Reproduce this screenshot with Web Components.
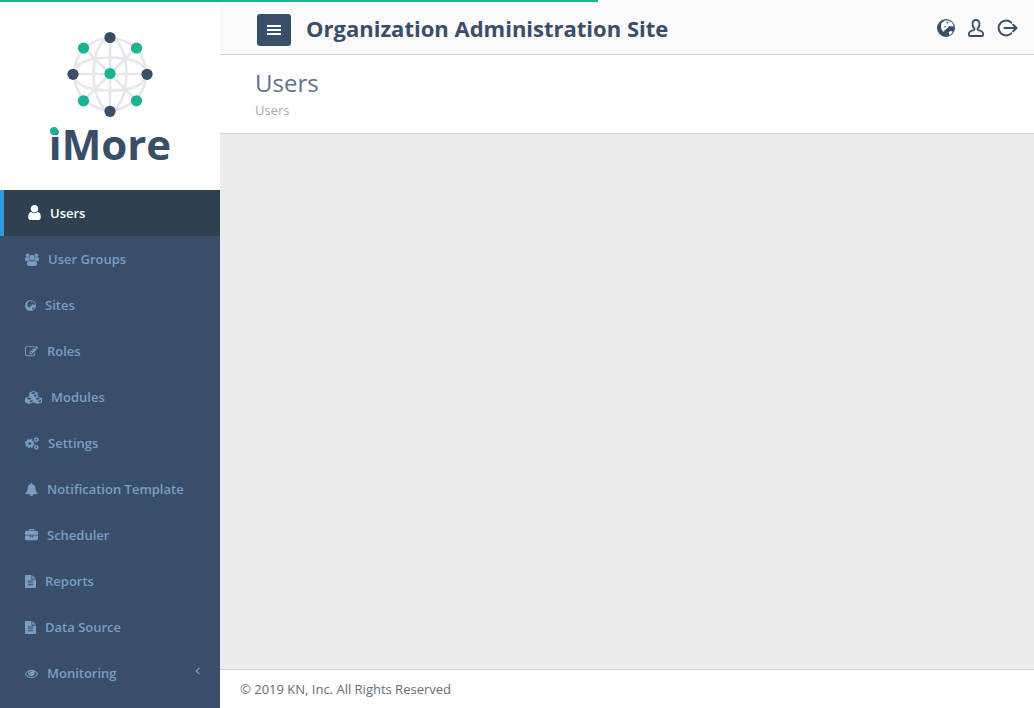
<!DOCTYPE html>
<html lang="en">
<head>
<meta charset="utf-8">
<meta name="viewport" content="width=device-width, initial-scale=1">
<title>Organization Administration Site</title>
<style>
html { --navy: #394e69; --green: #1ab394; --line: #d2d2d2; --muted: #779fc4; }
body { margin: 0; font: 13px/20px "Open Sans", sans-serif; color: #666c7a; }
</style>
</head>
<body>
<admin-app></admin-app>
<script>
const ICONS = {
  user: ['256 128 1280 1536', '<path d="M1536 1399q0 109-62.5 187t-150.5 78h-854q-88 0-150.5-78t-62.5-187q0-85 8.5-160.5t31.5-152 58.5-131 94-89 134.5-34.5q131 128 313 128t313-128q76 0 134.5 34.5t94 89 58.5 131 31.5 152 8.5 160.5zm-256-887q0 159-112.5 271.5t-271.5 112.5-271.5-112.5-112.5-271.5 112.5-271.5 271.5-112.5 271.5 112.5 112.5 271.5z"/>'],
  users: ['0 0 14 13', '<circle cx="2.7" cy="2.2" r="1.8"/><circle cx="11.3" cy="2.2" r="1.8"/><path d="M0 6.6C0 5 .4 4 1.2 4c.8.6 2 .8 3 .4-.2 1 0 1.8.5 2.6-1 0-1.6.4-2.1 1H1.5C.6 8 0 7.5 0 6.6zM14 6.6C14 5 13.6 4 12.8 4c-.8.6-2 .8-3 .4.2 1 0 1.8-.5 2.6 1 0 1.6.4 2.1 1h1.1C13.4 8 14 7.5 14 6.6z"/><circle cx="7" cy="4.7" r="2.7"/><path d="M4.3 7.4c1.6 1.4 3.8 1.4 5.4 0 1.6 0 2.3 1.6 2.3 3.7 0 1.2-.8 1.9-1.9 1.9H3.9C2.8 13 2 12.3 2 11.1 2 9 2.7 7.4 4.3 7.4z"/>'],
  globe: ['0 0 18 18', '<path fill-rule="evenodd" d="M9 0a9 9 0 1 0 0 18A9 9 0 0 0 9 0zM6.800 2.300L8.600 1.300 12 1.700l1.300 1.100 1.200.3 1.700 2.700.2 1.800-1.500-.3-1.500.3-.8-.8-1.300.9-.4 1.300-1.700.8-.9 1.500-1.500.2.6 1.200-1.400-.3-1.600-2.200L4 7l.4-2.700zM11.700 13.300l1.600-1.200 1.900.2.500.8-1.400 1.900-2 1.200z"/><path d="M9.600 2.600l1.900.6-.6 1.300-1.500-.5zM7.200 7.600l1.600-.5.3.8-1.300.5z"/>'],
  edit: ['0 0 1792 1792', '<path d="M888 1184l116-116-152-152-116 116v56h96v96h56zm440-720q-16-16-33 1l-350 350q-17 17-1 33t33-1l350-350q17-17 1-33zm80 594v190q0 119-84.5 203.5t-203.5 84.5h-832q-119 0-203.5-84.5t-84.5-203.5v-832q0-119 84.5-203.5t203.5-84.5h832q63 0 117 25 15 7 18 23 3 17-9 29l-49 49q-14 14-32 8-23-6-45-6h-832q-66 0-113 47t-47 113v832q0 66 47 113t113 47h832q66 0 113-47t47-113v-126q0-13 9-22l64-64q15-15 35-7t20 29zm-96-738l288 288-672 672h-288v-288zm444 132l-92 92-288-288 92-92q28-28 68-28t68 28l152 152q28 28 28 68t-28 68z"/>'],
  cubes: ['0 0 17 13', '<path fill-rule="evenodd" d="M8.500 0L12.700 1.400V5.500L17 7.100V11.200L12.800 13 8.500 11.200 4.200 13 0 11.200V7.100L4.300 5.500V1.400zM8.500 1L5.800 2.100 8.500 3.200 11.200 2.100zM9.200 4.300V6L11.600 5V3.400zM4.200 6.500L1.500 7.600 4.200 8.700 6.900 7.600zM4.900 9.800V11.500L7.500 10.400V8.700zM12.800 6.500L10.100 7.600 12.800 8.700 15.500 7.600zM13.500 9.800V11.500L16 10.400V8.700z"/>'],
  cogs: ['0 0 14 13', '<g fill="none" stroke="currentColor"><circle cx="4.7" cy="6.5" r="2.7" stroke-width="2.2"/><circle cx="4.7" cy="6.5" r="4.1" stroke-width="1.3" stroke-dasharray="1.7 1.52"/><circle cx="11.3" cy="2.7" r="1.5" stroke-width="1.3"/><circle cx="11.3" cy="2.7" r="2.3" stroke-width=".8" stroke-dasharray="1 .8"/><circle cx="11.3" cy="10.3" r="1.5" stroke-width="1.3"/><circle cx="11.3" cy="10.3" r="2.3" stroke-width=".8" stroke-dasharray="1 .8"/></g>'],
  bell: ['0 0 1792 1792', '<path d="M912 1696q0-16-16-16-59 0-101.5-42.5t-42.5-101.5q0-16-16-16t-16 16q0 73 51.5 124.5t124.5 51.5q16 0 16-16zm816-288q0 52-38 90t-90 38h-448q0 106-75 181t-181 75-181-75-75-181h-448q-52 0-90-38t-38-90q50-42 91-88t85-119.5 74.5-158.5 50-206 19.5-260q0-152 117-282.5t307-158.5q-8-19-8-39 0-40 28-68t68-28 68 28 28 68q0 20-8 39 190 28 307 158.5t117 282.5q0 139 19.5 260t50 206 74.5 158.5 85 119.5 91 88z"/>'],
  briefcase: ['0 0 1792 1792', '<path d="M640 256h512v-128h-512v128zm1152 640v480q0 66-47 113t-113 47h-1472q-66 0-113-47t-47-113v-480h672v160q0 26 19 45t45 19h320q26 0 45-19t19-45v-160h672zm-768 0v128h-256v-128h256zm768-480v384h-1792v-384q0-66 47-113t113-47h352v-160q0-40 28-68t68-28h576q40 0 68 28t28 68v160h352q66 0 113 47t47 113z"/>'],
  file: ['128 0 1536 1792', '<path d="M1596 476q14 14 28 36h-472v-472q22 14 36 28zm-476 164h544v1056q0 40-28 68t-68 28h-1344q-40 0-68-28t-28-68v-1600q0-40 28-68t68-28h800v544q0 40 28 68t68 28zm160 736v-64q0-14-9-23t-23-9h-704q-14 0-23 9t-9 23v64q0 14 9 23t23 9h704q14 0 23-9t9-23zm0-256v-64q0-14-9-23t-23-9h-704q-14 0-23 9t-9 23v64q0 14 9 23t23 9h704q14 0 23-9t9-23zm0-256v-64q0-14-9-23t-23-9h-704q-14 0-23 9t-9 23v64q0 14 9 23t23 9h704q14 0 23-9t9-23z"/>'],
  eye: ['0 0 1792 1792', '<path d="M1664 960q-152-236-381-353 61 104 61 225 0 185-131.5 316.5t-316.5 131.5-316.5-131.5-131.5-316.5q0-121 61-225-229 117-381 353 133 205 333.5 326.5t434.5 121.5 434.5-121.5 333.5-326.5zm-720-384q0-20-14-34t-34-14q-125 0-214.5 89.5t-89.5 214.5q0 20 14 34t34 14 34-14 14-34q0-86 61-147t147-61q20 0 34-14t14-34zm848 384q0 34-20 69-140 230-376.5 368.5t-499.5 138.5-499.5-139-376.5-368q-20-35-20-69t20-69q140-229 376.5-368t499.5-139 499.5 139 376.5 368q20 35 20 69z"/>'],
  bars: ['0 0 14 10', '<path d="M0 0h14v2H0zM0 4h14v2H0zM0 8h14v2H0z"/>'],
  chevron: ['0 0 6 8', '<path d="M4.5 .8L1.3 4l3.2 3.2" fill="none" stroke="currentColor" stroke-width="1.1"/>'],
  person: ['0 0 16 18', '<path d="M8 1C5.8 1 4.5 2.6 4.5 5c0 1.7.7 3.3 1.9 4.3v1.3c-1 .8-4.200 1.1-5.1 2.8-.4.8-.5 1.900-.3 3 .1.4.3.6.7.6h12.600c.4 0 .6-.2.7-.6.2-1.100.1-2.200-.3-3-.9-1.700-4.100-2-5.100-2.800V9.300c1.200-1 1.900-2.600 1.900-4.300 0-2.400-1.300-4-3.500-4z" fill="none" stroke="currentColor" stroke-width="1.800" stroke-linejoin="round"/>'],
  exit: ['0 0 21 18', '<path d="M14.3 3.6A7.5 7.5 0 1 0 14.3 14.4" fill="none" stroke="currentColor" stroke-width="2" stroke-linecap="round"/><path d="M7.5 9h12M16.2 5.7L19.5 9l-3.300 3.300" fill="none" stroke="currentColor" stroke-width="2" stroke-linecap="round" stroke-linejoin="round"/>']
};

function shadow(host, html) {
  host.attachShadow({ mode: 'open' }).innerHTML = html;
}

customElements.define('app-icon', class extends HTMLElement {
  connectedCallback() {
    if (this.shadowRoot) return;
    const [box, shape] = ICONS[this.getAttribute('name')];
    shadow(this, `<style>
      :host { display: block; flex: none; }
      svg { display: block; fill: currentColor; }
      </style><svg aria-hidden="true" viewBox="${box}" width="${this.getAttribute('w')}" height="${this.getAttribute('h')}">${shape}</svg>`);
  }
});

customElements.define('brand-logo', class extends HTMLElement {
  connectedCallback() {
    shadow(this, `<style>
      :host { display: flex; flex-direction: column; align-items: center; box-sizing: border-box; height: 190px; padding-top: 30px; background: #fff; }
      svg { display: block; }
      .word { position: relative; font-size: 42px; line-height: 52px; font-weight: 700; color: var(--navy); }
      .word::before { content: ""; position: absolute; left: 1px; top: 9px; width: 8px; height: 8px; border-radius: 4px; background: var(--green); }
      </style>
      <svg width="88" height="88" viewBox="66 30 88 88" aria-hidden="true">
        <g fill="none" stroke="#e6e7ed" stroke-width="2.6">
          <circle cx="110" cy="74" r="36"/><ellipse cx="110" cy="74" rx="16.500" ry="36"/>
          <path d="M110 38v72M74 74h72M84 48l52 52M136 48l-52 52M76 68c6-14 62-14 68 0M76 80c6 14 62 14 68 0"/>
        </g>
        <g fill="#394e69"><circle cx="110" cy="37.5" r="5.6"/><circle cx="73" cy="74.3" r="5.6"/><circle cx="147" cy="74.3" r="5.6"/><circle cx="110" cy="111.3" r="5.6"/></g>
        <g fill="#1ab394"><circle cx="83.5" cy="48" r="5.6"/><circle cx="136.5" cy="48" r="5.6"/><circle cx="83.5" cy="100.8" r="5.6"/><circle cx="136.5" cy="100.8" r="5.6"/><circle cx="110" cy="73.5" r="5.6"/></g>
      </svg>
      <div class="word">iMore</div>`);
  }
});

customElements.define('nav-item', class extends HTMLElement {
  connectedCallback() {
    const w = this.getAttribute('w'), active = this.hasAttribute('active');
    shadow(this, `<style>
      :host { display: block; }
      a { display: flex; align-items: center; gap: 9px; box-sizing: border-box; height: 46px; padding: 0 19px 0 25px; color: var(--muted); font-weight: 600; text-decoration: none; }
      :host([active]) a { padding-left: 24px; border-left: 4px solid #3498db; background: #2f4050; color: #fff; }
      :host([active]) app-icon { padding-bottom: 2px; }
      .more { margin-left: auto; padding-bottom: 4px; }
      </style>
      <a href="#"${active ? ' aria-current="page"' : ''}><app-icon name="${this.getAttribute('icon')}" w="${w}" h="${active ? 15 : 13}"></app-icon><slot></slot>
      ${this.hasAttribute('expandable') ? '<app-icon class="more" name="chevron" w="6" h="8"></app-icon>' : ''}</a>`);
  }
});

customElements.define('side-nav', class extends HTMLElement {
  connectedCallback() {
    shadow(this, `<style>
      :host { display: block; background: var(--navy); }
      </style>
      <brand-logo></brand-logo>
      <nav aria-label="Main">
        <nav-item icon="user" w="13" active>Users</nav-item>
        <nav-item icon="users" w="14">User Groups</nav-item>
        <nav-item icon="globe" w="11">Sites</nav-item>
        <nav-item icon="edit" w="13">Roles</nav-item>
        <nav-item icon="cubes" w="17">Modules</nav-item>
        <nav-item icon="cogs" w="14">Settings</nav-item>
        <nav-item icon="bell" w="13">Notification Template</nav-item>
        <nav-item icon="briefcase" w="13">Scheduler</nav-item>
        <nav-item icon="file" w="11">Reports</nav-item>
        <nav-item icon="file" w="11">Data Source</nav-item>
        <nav-item icon="eye" w="13" expandable>Monitoring</nav-item>
      </nav>`);
  }
});

customElements.define('top-bar', class extends HTMLElement {
  connectedCallback() {
    shadow(this, `<style>
      :host { display: flex; align-items: center; box-sizing: border-box; height: 55px; padding: 2px 16px 0 37px; background: #fafafa; border-bottom: 1px solid var(--line); color: var(--navy); }
      button { display: flex; align-items: center; justify-content: center; width: 34px; height: 32px; margin: 4px 15px 0 0; padding: 0; border: 0; border-radius: 3px; background: var(--navy); color: #fff; }
      h1 { margin: 0; font-size: 22px; line-height: 32px; font-weight: 700; white-space: nowrap; }
      .tools { display: flex; align-items: center; gap: 13px; margin-left: auto; }
      a { color: inherit; }
      </style>
      <button type="button" aria-label="Toggle navigation"><app-icon name="bars" w="14" h="10"></app-icon></button>
      <h1><slot></slot></h1>
      <div class="tools">
        <a href="#" aria-label="Language"><app-icon name="globe" w="18" h="18"></app-icon></a>
        <a href="#" aria-label="Profile"><app-icon name="person" w="16" h="18"></app-icon></a>
        <a href="#" aria-label="Sign out"><app-icon name="exit" w="21" h="18"></app-icon></a>
      </div>`);
  }
});

customElements.define('page-heading', class extends HTMLElement {
  connectedCallback() {
    shadow(this, `<style>
      :host { display: block; box-sizing: border-box; height: 79px; padding: 11px 35px 0; background: #fff; border-bottom: 1px solid var(--line); }
      h2 { margin: 0; font-size: 24px; line-height: 34px; font-weight: 400; color: #62708a; }
      div { color: #aaa; }
      </style>
      <h2><slot></slot></h2><div><slot name="crumb"></slot></div>`);
  }
});

customElements.define('page-footer', class extends HTMLElement {
  connectedCallback() {
    shadow(this, `<style>
      :host { display: block; padding: 9px 20px; background: #fff; border-top: 1px solid var(--line); }
      </style><slot></slot>`);
  }
});

customElements.define('admin-app', class extends HTMLElement {
  connectedCallback() {
    shadow(this, `<style>
      :host { display: grid; grid-template-columns: 220px 1fr; height: 100vh; overflow: hidden; position: relative; }
      .progress { position: absolute; top: 0; left: 0; width: 57.8%; height: 2px; background: var(--green); }
      .page { display: flex; flex-direction: column; min-width: 0; background: #ececec; }
      main { flex: 1; }
      footer { display: block; }
      </style>
      <side-nav></side-nav>
      <div class="page">
        <top-bar>Organization Administration Site</top-bar>
        <main><page-heading>Users<span slot="crumb">Users</span></page-heading></main>
        <footer><page-footer>© 2019 KN, Inc. All Rights Reserved</page-footer></footer>
      </div>
      <div class="progress"></div>`);
  }
});
</script>
</body>
</html>
